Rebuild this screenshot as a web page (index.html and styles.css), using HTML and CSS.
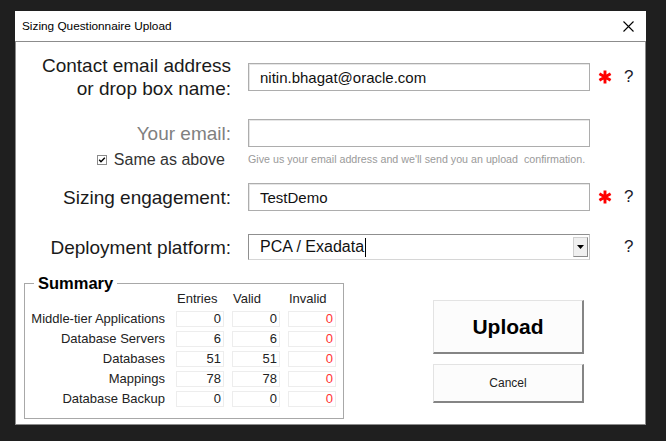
FILE: index.html
```html
<!DOCTYPE html>
<html lang="en">
<head>
<meta charset="utf-8">
<title>Sizing Questionnaire Upload</title>
<link rel="stylesheet" href="styles.css">
</head>
<body>
<div class="window">
  <div class="titlebar">
    <span class="title">Sizing Questionnaire Upload</span>
    <svg class="close" width="11" height="11" viewBox="0 0 11 11"><path d="M0.5 0.5 L10.5 10.5 M10.5 0.5 L0.5 10.5" stroke="#000" stroke-width="1.1" fill="none"/></svg>
  </div>
  <div class="content">
    <div class="form">
      <div class="row row-contact">
        <div class="lbl">Contact email address<br>or drop box name:</div>
        <div class="field">nitin.bhagat@oracle.com</div>
        <span class="req"><svg width="14" height="14" viewBox="0 0 14 14"><path d="M7 0.6 V13.4 M1.4 3.8 L12.6 10.2 M1.4 10.2 L12.6 3.8" stroke="#ff0000" stroke-width="2.9" fill="none"/></svg></span>
        <span class="help">?</span>
      </div>
      <div class="row row-your">
        <div class="lbl muted">Your email:</div>
        <div class="field"></div>
      </div>
      <div class="row row-sub">
        <div class="same"><svg class="check" width="10" height="10" viewBox="0 0 10 10"><rect x="0.5" y="0.5" width="9" height="9" fill="#fff" stroke="#8a8a8a"/><path d="M2.2 4.8 L4 6.8 L7.8 2.8" stroke="#000" stroke-width="1.4" fill="none"/></svg>Same as above</div>
        <div class="hint">Give us your email address and we'll send you an upload&nbsp; confirmation.</div>
      </div>
      <div class="row row-eng">
        <div class="lbl">Sizing engagement:</div>
        <div class="field">TestDemo</div>
        <span class="req"><svg width="14" height="14" viewBox="0 0 14 14"><path d="M7 0.6 V13.4 M1.4 3.8 L12.6 10.2 M1.4 10.2 L12.6 3.8" stroke="#ff0000" stroke-width="2.9" fill="none"/></svg></span>
        <span class="help">?</span>
      </div>
      <div class="row row-deploy">
        <div class="lbl">Deployment platform:</div>
        <div class="select"><span class="sel-text">PCA / Exadata<span class="caret"></span></span><span class="drop"><svg width="7" height="4" viewBox="0 0 7 4"><path d="M0 0 H7 L3.5 4 Z" fill="#000"/></svg></span></div>
        <span class="req"></span>
        <span class="help">?</span>
      </div>
    </div>
    <div class="bottom">
      <fieldset class="summary">
        <legend>Summary</legend>
        <div class="grid">
          <span></span><span class="hd">Entries</span><span class="hd">Valid</span><span class="hd">Invalid</span>
          <span class="rl">Middle-tier Applications</span><span class="cell">0</span><span class="cell">0</span><span class="cell bad">0</span>
          <span class="rl">Database Servers</span><span class="cell">6</span><span class="cell">6</span><span class="cell bad">0</span>
          <span class="rl">Databases</span><span class="cell">51</span><span class="cell">51</span><span class="cell bad">0</span>
          <span class="rl">Mappings</span><span class="cell">78</span><span class="cell">78</span><span class="cell bad">0</span>
          <span class="rl">Database Backup</span><span class="cell">0</span><span class="cell">0</span><span class="cell bad">0</span>
        </div>
      </fieldset>
      <div class="buttons">
        <button class="btn upload">Upload</button>
        <button class="btn cancel">Cancel</button>
      </div>
    </div>
  </div>
</div>
</body>
</html>
```
FILE: styles.css
```css
body {
  margin: 0;
  background: #1f1f1f;
  font-family: "Liberation Sans", Arial, sans-serif;
}
.window {
  margin: 11px 0 0 15px;
  width: 631px;
  background: #fff;
}
.titlebar {
  height: 30px;
  display: flex;
  align-items: center;
  justify-content: space-between;
  padding: 0 12px 0 7px;
  font-size: 11.8px;
  color: #000;
}
.close { display: block; }
.content {
  height: 382px;
  border: 1px solid #8c8c8c;
}
.form { padding-top: 12px; }
.row {
  display: grid;
  grid-template-columns: 232px 342px 34px 1fr;
  align-items: center;
}
.lbl {
  text-align: right;
  padding-right: 17px;
  font-size: 19px;
  line-height: 23px;
  color: #1a1a1a;
}
.lbl.muted { color: #808080; }
.field {
  height: 28px;
  box-sizing: border-box;
  border: 1px solid #adadad;
  box-shadow: inset 1px 1px 0 #e6e6e6;
  padding-left: 11px;
  font-size: 15px;
  color: #111;
  display: flex;
  align-items: center;
}
.req { padding-left: 8px; display: flex; align-items: center; }
.req svg { display: block; }
.help { font-size: 17px; color: #1c1c2c; }
.row-your { margin-top: 19px; }
.row-sub { margin-top: 2px; height: 16px; }
.same {
  display: flex;
  align-items: center;
  justify-content: flex-end;
  padding-right: 23px;
  font-size: 16px;
  color: #333;
  line-height: 16px;
  margin-top: 3px;
}
.check { display: block; margin-right: 7px; }
.hint {
  font-size: 10.7px;
  color: #9a9a9a;
  white-space: nowrap;
}
.row-eng { margin-top: 18px; }
.row-deploy { margin-top: 23px; }
.select {
  height: 26px;
  box-sizing: border-box;
  border: 1px solid #8f8f8f;
  border-right-color: #c4c4c4;
  border-bottom-color: #d6d6d6;
  display: flex;
  align-items: center;
  justify-content: space-between;
  padding: 0 1px 0 11px;
  font-size: 16px;
  color: #111;
}
.sel-text { display: flex; align-items: center; }
.caret {
  display: inline-block;
  width: 0;
  height: 19px;
  border-left: 1px solid #000;
  margin-left: 1px;
}
.drop {
  width: 15px;
  height: 20px;
  box-sizing: border-box;
  background: #f0f0f0;
  border: 1px solid #d0d0d0;
  border-right-color: #8a8a8a;
  border-bottom-color: #8a8a8a;
  display: flex;
  align-items: center;
  justify-content: center;
}
.drop svg { display: block; }
.bottom {
  display: flex;
  align-items: flex-start;
  margin-top: 14px;
  padding-left: 8px;
}
.summary {
  margin: 0;
  width: 320px;
  box-sizing: border-box;
  padding: 0 7px 11px 0;
  border: 1px solid #a8a8a8;
}
.summary legend {
  margin-left: 9px;
  padding: 0 4px;
  font-weight: bold;
  font-size: 16.5px;
  line-height: 18px;
  color: #000;
}
.grid {
  display: grid;
  grid-template-columns: 143px 48px 48px 48px;
  grid-template-rows: 15px repeat(5, 16px);
  column-gap: 8px;
  row-gap: 4px;
  font-size: 13px;
  color: #222;
}
.hd { line-height: 13px; padding-left: 1px; }
.rl { text-align: right; padding-right: 3px; line-height: 16px; white-space: nowrap; }
.cell {
  border: 1px solid #ededed;
  box-sizing: border-box;
  text-align: right;
  padding-right: 2px;
  line-height: 14px;
}
.cell.bad { color: #ff3333; }
.buttons {
  margin-left: 89px;
  padding-top: 26px;
  display: flex;
  flex-direction: column;
}
.btn {
  width: 151px;
  box-sizing: border-box;
  background: #fcfcfc;
  border: 1px solid #e3e3e3;
  border-right: 2px solid #858585;
  border-bottom: 2px solid #858585;
  font-family: "Liberation Sans", Arial, sans-serif;
  color: #000;
  padding: 0;
}
.upload { height: 54px; font-size: 21px; font-weight: bold; }
.cancel { height: 39px; margin-top: 10px; font-size: 12px; color: #222; }
```
